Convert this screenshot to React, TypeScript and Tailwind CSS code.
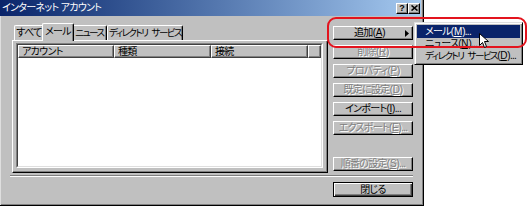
import React from 'react';

const FONT = "font-['Liberation_Sans','Noto_Sans_CJK_JP',sans-serif] [font-feature-settings:'palt'] whitespace-nowrap";

// small condensed UI text, close to MS UI Gothic widths
const TXT = 'text-[10px] leading-none tracking-[-0.7px]';
const TIGHT = 'text-[9.5px] leading-none tracking-[-1.5px]';

const raised =
  'bg-[#c0c0c0] border border-t-white border-l-white border-r-black border-b-black shadow-[inset_-1px_-1px_0_#808080]';

function Key({ k }: { k: string }) {
  return <span className="underline underline-offset-1 px-[0.5px]">{k}</span>;
}

function Btn({
  children,
  disabled,
  arrow,
}: {
  children: React.ReactNode;
  disabled?: boolean;
  arrow?: boolean;
}) {
  return (
    <div className={`h-[14px] w-[80px] flex items-center ${raised}`}>
      <span
        className={`flex-1 text-center ${TXT} ${
          disabled ? 'text-[#808080] [text-shadow:1px_1px_0_#fff]' : 'text-black'
        }`}
      >
        {children}
      </span>
      {arrow && (
        <svg width="4" height="7" viewBox="0 0 4 7" className="mr-[3px]">
          <path d="M0 0 L4 3.5 L0 7 Z" fill="#000" />
        </svg>
      )}
    </div>
  );
}

function Tab({
  children,
  w,
  selected,
}: {
  children: React.ReactNode;
  w: number;
  selected?: boolean;
}) {
  return (
    <div
      style={{ width: w }}
      className={`shrink-0 flex items-center justify-center text-black bg-[#c0c0c0] border-t border-l border-t-white border-l-white border-r border-r-black shadow-[inset_-1px_0_0_#808080] rounded-t-[2px] ${
        selected ? 'relative z-10 h-[18px] -mx-[2px] -mb-[1px] pb-[2px]' : 'h-[15px]'
      }`}
    >
      {children}
    </div>
  );
}

function HeaderCell({ label, w }: { label?: string; w?: number }) {
  return (
    <div
      style={w ? { width: w } : undefined}
      className={`h-full flex items-center pl-[3px] ${TXT} text-black bg-[#c0c0c0] border border-t-white border-l-white border-r-[#404040] border-b-[#404040] shadow-[inset_-1px_-1px_0_#808080] ${
        w ? 'shrink-0' : 'flex-1'
      }`}
    >
      {label}
    </div>
  );
}

export default function App() {
  return (
    <div className={`w-[530px] h-[207px] bg-white relative overflow-hidden ${FONT}`}>
      {/* dialog window */}
      <div className="w-[424px] h-[206px] bg-[#c0c0c0] flex flex-col border-r border-b border-black shadow-[inset_-1px_-1px_0_#808080]">
        {/* title bar */}
        <div className="h-[16px] mr-[2px] flex items-center bg-gradient-to-r from-[#0a246a] to-[#a6caf0]">
          <span className={`pl-[2px] ${TXT} text-white`}>インターネット アカウント</span>
          <div className="ml-auto mr-[1px] flex">
            <div className={`w-[12px] h-[11px] flex items-center justify-center ${raised}`}>
              <span className="text-[9px] leading-none font-bold text-black font-['Liberation_Sans',sans-serif]">?</span>
            </div>
            <div className={`w-[12px] h-[11px] flex items-center justify-center ${raised}`}>
              <svg width="7" height="6" viewBox="0 0 7 6">
                <path d="M0.5 0.5 L6.5 5.5 M6.5 0.5 L0.5 5.5" stroke="#000" strokeWidth="1.6" />
              </svg>
            </div>
          </div>
        </div>

        {/* body */}
        <div className="flex-1 flex flex-col border-l border-l-[#dfdfdf]">
          <div className="flex mt-[7px]">
            {/* tabs + panel */}
            <div className="ml-[11px] w-[316px] flex flex-col">
              <div className="h-[17px] flex items-end pl-[2px]">
                <Tab w={30}>
                  <span className={TXT}>すべて</span>
                </Tab>
                <Tab w={32} selected>
                  <span className={TXT}>メール</span>
                </Tab>
                <Tab w={35}>
                  <span className={TIGHT}>ニュース</span>
                </Tab>
                <Tab w={76}>
                  <span className={TIGHT}>
                    ディレクトリ<span className="inline-block w-[4px]" />サービス
                  </span>
                </Tab>
              </div>
              <div className={`h-[133px] pl-[3px] pt-[2px] ${raised}`}>
                <div className="w-[307px] h-[125px] border border-t-[#808080] border-l-[#808080] border-r-white border-b-white">
                  <div className="h-full flex flex-col bg-white border border-t-[#404040] border-l-[#404040] border-r-[#dfdfdf] border-b-[#dfdfdf]">
                    <div className="h-[13px] flex">
                      <HeaderCell label="アカウント" w={96} />
                      <HeaderCell label="種類" w={97} />
                      <HeaderCell label="接続" w={97} />
                      <HeaderCell />
                    </div>
                  </div>
                </div>
              </div>
            </div>

            {/* buttons */}
            <div className="ml-[5px] pt-[3px] pb-[2px] flex flex-col gap-[5px]">
              <Btn arrow>
                追加(<Key k="A" />)
              </Btn>
              <Btn disabled>
                削除(<Key k="R" />)
              </Btn>
              <Btn disabled>
                プロパティ(<Key k="P" />)
              </Btn>
              <Btn disabled>
                既定に設定(<Key k="D" />)
              </Btn>
              <Btn>
                インポート(<Key k="I" />)...
              </Btn>
              <Btn disabled>
                エクスポート(<Key k="E" />)...
              </Btn>
              <div className="mt-auto">
                <Btn disabled>
                  順番の設定(<Key k="S" />)...
                </Btn>
              </div>
            </div>
          </div>

          {/* separator */}
          <div className="ml-[9px] w-[403px] mt-[2px] h-[2px] border-t border-t-[#808080] border-b border-b-white" />

          {/* close */}
          <div className="mt-[5px] flex justify-end pr-[10px]">
            <div className="h-[15px] w-[80px] flex items-center justify-center border border-black bg-[#c0c0c0] shadow-[inset_1px_1px_0_#fff,inset_-1px_-1px_0_#404040,inset_-2px_-2px_0_#808080]">
              <span className={`${TXT} text-black`}>閉じる</span>
            </div>
          </div>
        </div>
      </div>

      {/* sub menu of 追加 */}
      <div className="absolute left-[414px] top-[22px] w-[109px] p-[2px] bg-[#c0c0c0] border border-t-[#dfdfdf] border-l-[#dfdfdf] border-r-black border-b-black shadow-[inset_1px_1px_0_#fff,inset_-1px_-1px_0_#808080]">
        <div className={`h-[13px] flex items-center pl-[8px] bg-[#0a246a] text-white ${TXT}`}>
          メール(<Key k="M" />)...
        </div>
        <div className={`h-[12px] flex items-center pl-[8px] text-black ${TXT}`}>
          ニュース(<Key k="N" />)...
        </div>
        <div className="h-[12px] flex items-center pl-[8px] text-black">
          <span className={TIGHT}>
            ディレクトリ<span className="inline-block w-[4px]" />サービス
          </span>
          <span className={TXT}>
            (<Key k="D" />)...
          </span>
        </div>
      </div>

      {/* red annotation */}
      <div className="absolute left-[327px] top-[17px] w-[200px] h-[31px] border-2 border-[#e3141e] rounded-[9px]" />

      {/* mouse cursor */}
      <svg className="absolute left-[479px] top-[33px]" width="11" height="16" viewBox="0 0 11 16">
        <path d="M0.5 0.5 L0.5 12.5 L3.5 9.5 L5.5 14.5 L7.5 13.5 L5.5 8.5 L9.5 8.5 Z" fill="#fff" stroke="#000" strokeWidth="1" />
      </svg>
    </div>
  );
}
